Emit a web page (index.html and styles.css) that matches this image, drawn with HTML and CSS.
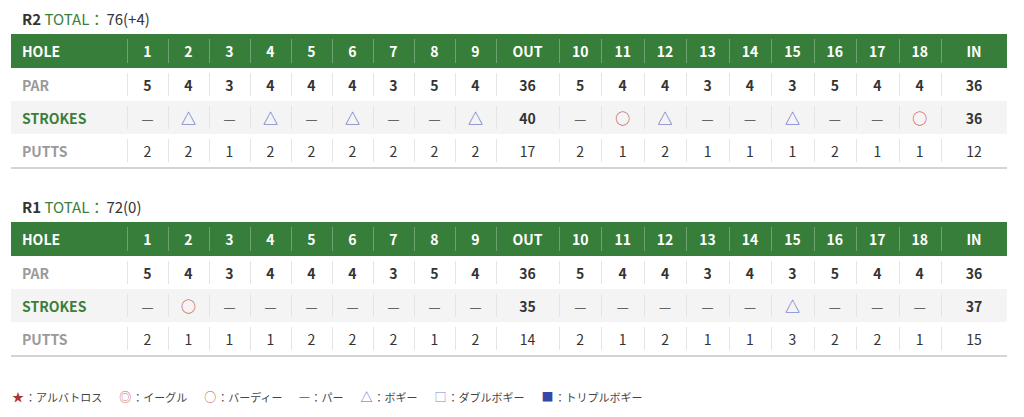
FILE: index.html
```html
<!DOCTYPE html>
<html lang="ja">
<head>
<meta charset="utf-8">
<title>Score</title>
<link rel="stylesheet" href="styles.css">
</head>
<body>
<div class="page">
  <section class="round">
    <h2 class="round-title"><b>R2</b> <span class="total">TOTAL</span><span class="colon">：</span>76(+4)</h2>
    <table class="score">
      <colgroup>
        <col class="c-label"><col class="c-f"><col class="c-f"><col class="c-f"><col class="c-f"><col class="c-f"><col class="c-f"><col class="c-f"><col class="c-f"><col class="c-f"><col class="c-sum"><col class="c-b"><col class="c-b"><col class="c-b"><col class="c-b"><col class="c-b"><col class="c-b"><col class="c-b"><col class="c-b"><col class="c-b"><col class="c-in">
      </colgroup>
      <tr class="hole"><th>HOLE</th><th>1</th><th>2</th><th>3</th><th>4</th><th>5</th><th>6</th><th>7</th><th>8</th><th>9</th><th>OUT</th><th>10</th><th>11</th><th>12</th><th>13</th><th>14</th><th>15</th><th>16</th><th>17</th><th>18</th><th>IN</th></tr>
      <tr class="par"><td>PAR</td><td>5</td><td>4</td><td>3</td><td>4</td><td>4</td><td>4</td><td>3</td><td>5</td><td>4</td><td>36</td><td>5</td><td>4</td><td>4</td><td>3</td><td>4</td><td>3</td><td>5</td><td>4</td><td>4</td><td>36</td></tr>
      <tr class="strokes"><td>STROKES</td><td><span class="m-par">—</span></td><td><span class="m-bogey">△</span></td><td><span class="m-par">—</span></td><td><span class="m-bogey">△</span></td><td><span class="m-par">—</span></td><td><span class="m-bogey">△</span></td><td><span class="m-par">—</span></td><td><span class="m-par">—</span></td><td><span class="m-bogey">△</span></td><td class="sum">40</td><td><span class="m-par">—</span></td><td><span class="m-birdie">○</span></td><td><span class="m-bogey">△</span></td><td><span class="m-par">—</span></td><td><span class="m-par">—</span></td><td><span class="m-bogey">△</span></td><td><span class="m-par">—</span></td><td><span class="m-par">—</span></td><td><span class="m-birdie">○</span></td><td class="sum">36</td></tr>
      <tr class="putts"><td>PUTTS</td><td>2</td><td>2</td><td>1</td><td>2</td><td>2</td><td>2</td><td>2</td><td>2</td><td>2</td><td>17</td><td>2</td><td>1</td><td>2</td><td>1</td><td>1</td><td>1</td><td>2</td><td>1</td><td>1</td><td>12</td></tr>
    </table>
  </section>

  <section class="round">
    <h2 class="round-title"><b>R1</b> <span class="total">TOTAL</span><span class="colon">：</span>72(0)</h2>
    <table class="score">
      <colgroup>
        <col class="c-label"><col class="c-f"><col class="c-f"><col class="c-f"><col class="c-f"><col class="c-f"><col class="c-f"><col class="c-f"><col class="c-f"><col class="c-f"><col class="c-sum"><col class="c-b"><col class="c-b"><col class="c-b"><col class="c-b"><col class="c-b"><col class="c-b"><col class="c-b"><col class="c-b"><col class="c-b"><col class="c-in">
      </colgroup>
      <tr class="hole"><th>HOLE</th><th>1</th><th>2</th><th>3</th><th>4</th><th>5</th><th>6</th><th>7</th><th>8</th><th>9</th><th>OUT</th><th>10</th><th>11</th><th>12</th><th>13</th><th>14</th><th>15</th><th>16</th><th>17</th><th>18</th><th>IN</th></tr>
      <tr class="par"><td>PAR</td><td>5</td><td>4</td><td>3</td><td>4</td><td>4</td><td>4</td><td>3</td><td>5</td><td>4</td><td>36</td><td>5</td><td>4</td><td>4</td><td>3</td><td>4</td><td>3</td><td>5</td><td>4</td><td>4</td><td>36</td></tr>
      <tr class="strokes"><td>STROKES</td><td><span class="m-par">—</span></td><td><span class="m-birdie">○</span></td><td><span class="m-par">—</span></td><td><span class="m-par">—</span></td><td><span class="m-par">—</span></td><td><span class="m-par">—</span></td><td><span class="m-par">—</span></td><td><span class="m-par">—</span></td><td><span class="m-par">—</span></td><td class="sum">35</td><td><span class="m-par">—</span></td><td><span class="m-par">—</span></td><td><span class="m-par">—</span></td><td><span class="m-par">—</span></td><td><span class="m-par">—</span></td><td><span class="m-bogey">△</span></td><td><span class="m-par">—</span></td><td><span class="m-par">—</span></td><td><span class="m-par">—</span></td><td class="sum">37</td></tr>
      <tr class="putts"><td>PUTTS</td><td>2</td><td>1</td><td>1</td><td>1</td><td>2</td><td>2</td><td>2</td><td>1</td><td>2</td><td>14</td><td>2</td><td>1</td><td>2</td><td>1</td><td>1</td><td>3</td><td>2</td><td>2</td><td>1</td><td>15</td></tr>
    </table>
  </section>

  <ul class="legend">
    <li><span class="l-albatross">★</span>：アルバトロス</li>
    <li><span class="l-eagle">◎</span>：イーグル</li>
    <li><span class="l-birdie">○</span>：バーディー</li>
    <li><span class="l-par">—</span>：パー</li>
    <li><span class="l-bogey">△</span>：ボギー</li>
    <li><span class="l-double">□</span>：ダブルボギー</li>
    <li><span class="l-triple">■</span>：トリプルボギー</li>
  </ul>
</div>
</body>
</html>
```

FILE: styles.css
```css
* { box-sizing: border-box; }

body {
  margin: 0;
  background: #fff;
  font-family: "Noto Sans CJK JP", "Noto Sans", sans-serif;
  color: #333;
}

.page {
  padding: 8px 17px 0 11px;
}

.round + .round {
  margin-top: 27px;
}

.round-title {
  margin: 0 0 4px 11px;
  height: 22px;
  line-height: 22px;
  font-size: 15px;
  font-weight: 400;
  color: #333;
}

.round-title b {
  font-weight: 700;
}

.total {
  color: #3a7f3c;
}

.colon {
  color: #3a7f3c;
  margin-right: 2px;
}

.score {
  width: 996px;
  table-layout: fixed;
  border-collapse: collapse;
  border-bottom: 2px solid #d4d4d4;
}

.c-label { width: 116px; }
.c-f { width: 41px; }
.c-sum { width: 63px; }
.c-b { width: 42.44px; }
.c-in { width: 66px; }

.score th,
.score td {
  padding: 0;
  text-align: center;
  font-size: 14px;
  white-space: nowrap;
  background-repeat: no-repeat;
  background-position: left center;
  background-size: 1px calc(100% - 10px);
  background-image: linear-gradient(#e4e4e4, #e4e4e4);
}

.score th:first-child,
.score td:first-child {
  text-align: left;
  padding-left: 11px;
  background-image: none;
  font-weight: 700;
}

.hole th {
  height: 34px;
  background-color: #377e3a;
  background-image: linear-gradient(rgba(255,255,255,0.28), rgba(255,255,255,0.28));
  color: #fff;
  font-weight: 700;
}

.par td {
  height: 33px;
  font-weight: 700;
  color: #333;
}

.par td:first-child,
.putts td:first-child {
  color: #9a9a9a;
}

.strokes td {
  height: 33px;
  background-color: #f4f4f4;
  color: #333;
}

.strokes td:first-child {
  color: #3a7f3c;
}

.strokes .sum {
  font-weight: 700;
}

.putts td {
  height: 34px;
  color: #333;
  font-weight: 400;
}

.m-par {
  font-family: "Liberation Sans", sans-serif;
  font-size: 11px;
  color: #444;
  vertical-align: 1px;
}

.m-bogey {
  font-size: 15px;
  color: #5058c2;
}

.m-birdie {
  font-size: 15px;
  color: #c84a46;
}

.legend {
  list-style: none;
  margin: 31px 0 0 1px;
  padding: 0;
  display: flex;
  gap: 17px;
  font-size: 11px;
  line-height: 18px;
  color: #444;
}

.legend li {
  display: flex;
  align-items: center;
}

.legend li span {
  display: inline-block;
  font-size: 12px;
  margin-right: 1px;
}

.l-albatross { color: #b0332f; }
.l-eagle { color: #d0605c; }
.l-birdie { color: #c9544f; }
.legend .l-par { color: #555; font-family: "Liberation Sans", sans-serif; font-size: 10px; }
.l-bogey { color: #5a64c6; }
.l-double { color: #7d86d2; }
.l-triple { color: #3a45a8; }
```
